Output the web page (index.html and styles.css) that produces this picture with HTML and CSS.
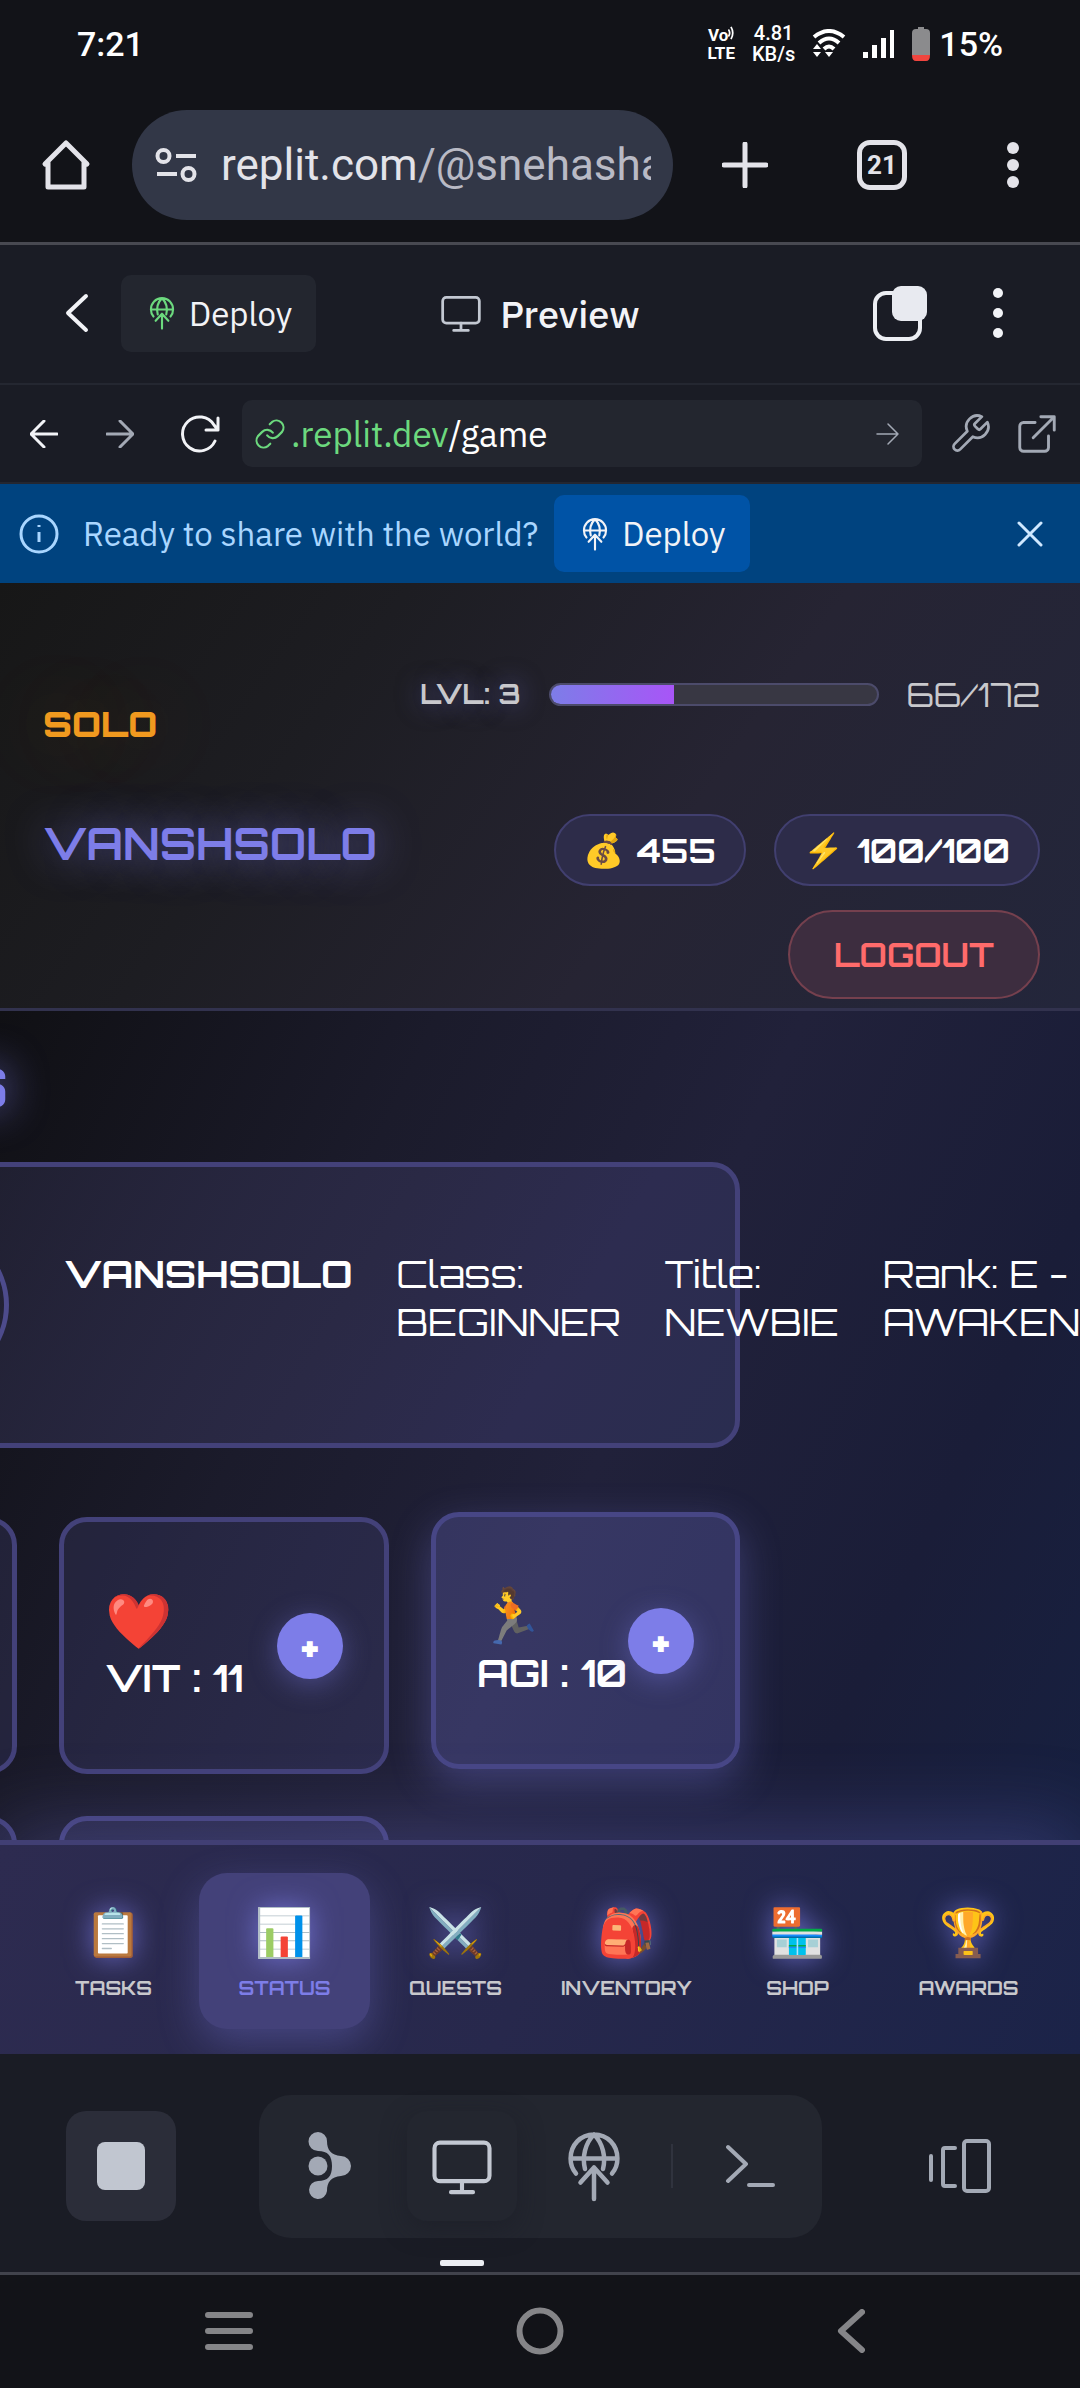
FILE: index.html
```html
<!DOCTYPE html>
<html lang="en">
<head>
<meta charset="utf-8">
<meta name="viewport" content="width=device-width, initial-scale=1">
<title>Solo – Status</title>
<link rel="stylesheet" href="styles.css">
</head>
<body>
<svg class="defs" aria-hidden="true">
  <symbol id="deploy" viewBox="0 0 24 24"><path d="M6 14.500A7.500 7.500 0 0 1 4.200 9.500C4.200 5 7.500 1.500 12 1.500s7.800 3.500 7.800 8a7.500 7.500 0 0 1-1.800 5M4.200 9.500h15.600M9 13C8 9 9 4.500 12 1.500c3 3 4 7.500 3 11.500M12 23V12.500M7.500 17.500 12 12.500l4.500 5"/></symbol>
  <symbol id="monitor" viewBox="0 0 24 24"><rect x="2" y="3.500" width="20" height="14" rx="2"/><path d="M12 17.500V21.500M8 21.500h8"/></symbol>
</svg>

<header class="browser">
  <div class="status">
    <span class="clock">7:21</span>
    <div class="indicators">
      <span class="volte"><b>Vo<svg viewBox="0 0 6 16" width="6" height="14"><path d="M0 4q3 4 0 8M3 1q4 7 0 14"/></svg></b><b>LTE</b></span>
      <span class="speed"><b>4.81</b><b>KB/s</b></span>
      <svg viewBox="0 0 34 30" width="34" height="30"><path d="M2 8Q17-4 32 8M7 14Q17 5 27 14M12 20Q17 15 22 20" fill="none" stroke="#fff" stroke-width="4"/><path d="M13 23h8l-4 5zM1 20h8L5 15zM1 23h8l-4 5z" fill="#fff"/></svg>
      <svg viewBox="0 0 32 28" width="32" height="28"><path d="M0 22h5v6H0zM9 15h5v13H9zM18 8h5v20h-5zM27 0h4v28h-4z" fill="#fff"/></svg>
      <svg viewBox="0 0 18 34" width="18" height="34"><path d="M6 0h6v2h2q4 0 4 4v22H0V6q0-4 4-4h2z" fill="#8b8b8d"/><path d="M0 28h18q0 6-4 6H4q-4 0-4-6z" fill="#f0453f"/></svg>
      <span class="percent">15%</span>
    </div>
  </div>
  <div class="toolbar">
    <button class="ico" aria-label="Home"><svg viewBox="0 0 52 52" width="52" height="52"><path d="M5 25 26 4l21 21M8 22v26h36V22" fill="none" stroke="#e3e3e9" stroke-width="5" stroke-linejoin="round" stroke-linecap="round"/></svg></button>
    <div class="omnibox">
      <svg viewBox="0 0 42 36" width="42" height="36"><g fill="none" stroke="#e3e3e9" stroke-width="4"><circle cx="8.500" cy="9" r="6"/><path d="M21 9h20M2 27h20"/><circle cx="33.500" cy="27" r="6"/></g></svg>
      <a class="address" href="#">replit.com<span>/@snehasha</span></a>
    </div>
    <button class="ico" aria-label="New tab"><svg viewBox="0 0 46 46" width="46" height="46"><path d="M23 2v42M2 23h42" stroke="#e3e3e9" stroke-width="5" stroke-linecap="round"/></svg></button>
    <button class="tabs" aria-label="Tabs">21</button>
    <button class="ico" aria-label="Menu"><svg viewBox="0 0 12 46" width="12" height="46" fill="#e3e3e9"><circle cx="6" cy="6" r="6"/><circle cx="6" cy="23" r="6"/><circle cx="6" cy="40" r="6"/></svg></button>
  </div>
</header>

<section class="pane">
  <button class="ico back" aria-label="Back"><svg viewBox="0 0 24 40" width="24" height="40"><path d="M21 3 3 20l18 17" fill="none" stroke="#f2f3f7" stroke-width="4" stroke-linecap="round" stroke-linejoin="round"/></svg></button>
  <button class="deploy"><svg class="line green" width="34" height="34"><use href="#deploy"/></svg>Deploy</button>
  <h1 class="pane-title"><svg class="line" width="44" height="44"><use href="#monitor"/></svg>Preview</h1>
  <div class="pane-actions">
    <button class="ico" aria-label="Switch tab"><svg viewBox="0 0 54 56" width="54" height="56"><rect x="2" y="8" width="45" height="46" rx="11" fill="none" stroke="#eceef3" stroke-width="4"/><rect x="19" y="1" width="35" height="35" rx="9" fill="#e8eaf0"/></svg></button>
    <button class="ico" aria-label="More"><svg viewBox="0 0 10 50" width="10" height="50" fill="#f2f3f7"><circle cx="5" cy="5" r="5"/><circle cx="5" cy="25" r="5"/><circle cx="5" cy="45" r="5"/></svg></button>
  </div>
</section>

<section class="webbar">
  <button class="ico" aria-label="Go back"><svg class="line white bold" viewBox="0 0 28 28" width="28" height="28"><path d="M27 14H1M14 1 1 14l13 13"/></svg></button>
  <button class="ico forward" aria-label="Go forward"><svg class="line dim bold" viewBox="0 0 28 28" width="28" height="28"><path d="M1 14h26M14 1l13 13-13 13"/></svg></button>
  <button class="ico" aria-label="Reload"><svg class="line white bold" viewBox="0 0 42 38" width="42" height="38"><path d="M37 26A17 17 0 1 1 36 10l4 5M40 3v12H28"/></svg></button>
  <div class="url">
    <svg class="line green" viewBox="0 0 24 24" width="34" height="34"><path d="M10 13a5 5 0 0 0 7.500.5l3-3a5 5 0 0 0-7-7l-1.700 1.700M14 11a5 5 0 0 0-7.500-.5l-3 3a5 5 0 0 0 7 7l1.700-1.700"/></svg>
    <a href="#"><span>.replit.dev</span>/game</a>
    <svg class="line dim go" viewBox="0 0 24 24" width="24" height="24"><path d="M1 12h21M12 2l10 10-10 10"/></svg>
  </div>
  <button class="ico" aria-label="Developer tools"><svg class="line dim" viewBox="0 0 24 24" width="44" height="44"><path d="M14.700 6.300a1 1 0 0 0 0 1.400l1.600 1.600a1 1 0 0 0 1.400 0l3.770-3.770a6 6 0 0 1-7.940 7.940l-6.910 6.910a2.120 2.120 0 0 1-3-3l6.910-6.910a6 6 0 0 1 7.940-7.940z"/></svg></button>
  <button class="ico" aria-label="Open in new tab"><svg class="line dim" viewBox="0 0 24 24" width="46" height="46"><path d="M18 13v6a2 2 0 0 1-2 2H5a2 2 0 0 1-2-2V8a2 2 0 0 1 2-2h6M14 3h7v7M10 14 21 3"/></svg></button>
</section>

<aside class="banner">
  <svg viewBox="0 0 40 40" width="40" height="40"><circle cx="20" cy="20" r="18" fill="none" stroke="#a9d6ff" stroke-width="3"/><path d="M20 18v10M20 11v2" stroke="#a9d6ff" stroke-width="3"/></svg>
  <p>Ready to share with the world?</p>
  <button class="deploy blue"><svg class="line white" width="34" height="34"><use href="#deploy"/></svg>Deploy</button>
  <button class="ico close" aria-label="Dismiss"><svg viewBox="0 0 26 26" width="26" height="26"><path d="M2 2l22 22M24 2 2 24" stroke="#cfe8ff" stroke-width="3" stroke-linecap="round"/></svg></button>
</aside>

<section class="game">
  <header class="player">
    <div class="identity">
      <p class="rank">SOLO</p>
      <h2 class="name">VANSHSOLO</h2>
    </div>
    <div class="stats">
      <div class="level">
        <span class="lvl">LVL: 3</span>
        <div class="bar"><div class="fill" style="width:38%"></div></div>
        <span class="xp">66/172</span>
      </div>
      <div class="pills">
        <span class="pill"><span class="emoji">💰</span>455</span>
        <span class="pill"><span class="emoji">⚡</span>100/100</span>
      </div>
      <button class="logout">LOGOUT</button>
    </div>
  </header>

  <main class="board">
    <div class="sheet">
      <h2 class="heading">S</h2>
      <div class="card profile">
        <div class="avatar"></div>
        <div class="facts">
          <strong>VANSHSOLO</strong>
          <span>Class:<br>BEGINNER</span>
          <span>Title:<br>NEWBIE</span>
          <span>Rank: E -<br>AWAKENED</span>
        </div>
      </div>
      <div class="grid">
        <div class="card stat"></div>
        <div class="card stat"><div><span class="emoji">❤️</span><b>VIT : 11</b></div><button class="plus" aria-label="Raise vitality">+</button></div>
        <div class="card stat raised"><div><span class="emoji">🏃</span><b>AGI : 10</b></div><button class="plus" aria-label="Raise agility">+</button></div>
        <div class="card stat"></div>
        <div class="card stat"></div>
      </div>
    </div>
  </main>

  <nav class="menu">
    <a href="#"><span class="emoji">📋</span>TASKS</a>
    <a href="#" class="on"><span class="emoji">📊</span>STATUS</a>
    <a href="#"><span class="emoji">⚔️</span>QUESTS</a>
    <a href="#"><span class="emoji">🎒</span>INVENTORY</a>
    <a href="#"><span class="emoji">🏪</span>SHOP</a>
    <a href="#"><span class="emoji">🏆</span>AWARDS</a>
  </nav>
</section>

<footer class="dock">
  <button class="slot stop" aria-label="Stop"><span></span></button>
  <div class="group">
    <button class="slot" aria-label="Agent"><svg viewBox="0 0 44 68" width="44" height="68" fill="#a3a9b5"><path d="M10 0a9 9 0 0 1 9 9c0 9 4 14 14 15a10 10 0 0 1 0 20c-10 1-14 6-14 15a9 9 0 1 1-9-10c10 0 14-5 14-15S20 19 10 19A9 9 0 0 1 10 0z"/><circle cx="10" cy="34" r="9.500"/></svg></button>
    <button class="slot current" aria-label="Preview"><svg class="line" width="72" height="66"><use href="#monitor"/></svg></button>
    <button class="slot" aria-label="Deployments"><svg class="line dim" width="72" height="72"><use href="#deploy"/></svg></button>
    <i class="divider"></i>
    <button class="slot" aria-label="Shell"><svg viewBox="0 0 50 44" width="50" height="44"><path d="M3 3l18 17L3 37M24 41h24" fill="none" stroke="#a3a9b5" stroke-width="4" stroke-linecap="round" stroke-linejoin="round"/></svg></button>
  </div>
  <button class="slot" aria-label="Open panes"><svg viewBox="0 0 62 54" width="62" height="54"><path d="M2 17v24M26 9H16q-2 0-2 2v34q0 2 2 2h10" fill="none" stroke="#a3a9b5" stroke-width="4" stroke-linecap="round"/><rect x="35" y="2" width="25" height="50" rx="3" fill="none" stroke="#a3a9b5" stroke-width="4"/></svg></button>
</footer>

<nav class="system">
  <button class="ico" aria-label="Recents"><svg viewBox="0 0 48 38" width="48" height="38"><path d="M3 3h42M3 19h42M3 35h42" stroke="#858588" stroke-width="6" stroke-linecap="round"/></svg></button>
  <button class="ico" aria-label="Home screen"><svg viewBox="0 0 48 48" width="48" height="48"><circle cx="24" cy="24" r="20.500" fill="none" stroke="#858588" stroke-width="6"/></svg></button>
  <button class="ico" aria-label="Back"><svg viewBox="0 0 28 44" width="28" height="44"><path d="M25 3 4 22l21 19" fill="none" stroke="#858588" stroke-width="6" stroke-linecap="round" stroke-linejoin="round"/></svg></button>
</nav>
</body>
</html>
```
FILE: styles.css
```css
* { box-sizing: border-box; }
body { margin: 0; background: #121318; color: #fff; font-family: Roboto, "Noto Sans", sans-serif; overflow-x: hidden; }
p, h1, h2 { margin: 0; }
button { margin: 0; padding: 0; border: 0; background: none; color: inherit; font: inherit; }
a { color: inherit; text-decoration: none; }
svg { display: block; flex: none; }
.defs { position: absolute; width: 0; height: 0; }
.line { fill: none; stroke: #c3c8d2; stroke-width: 1.5; stroke-linecap: round; stroke-linejoin: round; }
.bold { stroke-width: 3; }
.green { stroke: #6cd97e; }
.white { stroke: #f2f3f7; }
.dim { stroke: #a3a9b5; }
.ico { display: grid; place-items: center; flex: none; }
.emoji { font-family: "Noto Color Emoji", sans-serif; font-weight: 400; }

/* phone status bar and browser toolbar */
.browser { border-bottom: 3px solid #484951; background: #121318; }
.status { display: flex; justify-content: space-between; align-items: center; height: 88px; padding: 0 77px; font-size: 34px; font-weight: 500; }
.indicators { display: flex; align-items: center; gap: 17px; }
.volte, .speed { display: grid; justify-items: center; font-size: 20px; line-height: 21px; }
.volte { font-size: 17px; line-height: 18px; }
.volte b { display: flex; }
.speed b { font-weight: 500; }
.volte svg { fill: none; stroke: #fff; stroke-width: 2; }
.percent { margin-left: -8px; }
.toolbar { display: flex; align-items: center; height: 154px; padding: 0 61px 0 40px; }
.omnibox { flex: 1; min-width: 0; display: flex; align-items: center; gap: 24px; height: 110px; margin: 0 49px 0 40px; padding: 0 22px 0 23px; border-radius: 55px; background: #323747; }
.address { flex: 1; overflow: hidden; white-space: nowrap; font-size: 44px; line-height: 60px; color: #e3e3e9; }
.address span { color: #b9bac5; }
.tabs { width: 50px; height: 50px; margin: 0 100px 0 89px; border: 5px solid #e3e3e9; border-radius: 13px; font-size: 26px; line-height: 40px; font-weight: 700; color: #e3e3e9; }

/* workspace pane header */
.pane, .webbar, .banner { font-family: "IBM Plex Sans", Roboto, "Noto Sans", sans-serif; }
.pane { display: grid; grid-template-columns: auto auto 1fr auto; align-items: center; height: 140px; padding: 0 77px 2px 65px; background: #1a1c25; border-bottom: 2px solid #242731; }
.back { margin-right: 32px; }
.deploy { display: flex; align-items: center; gap: 10px; height: 77px; padding: 0 24px; border-radius: 10px; background: #23262f; font-size: 33px; color: #f2f3f7; }
.pane-title { display: flex; align-items: center; gap: 17px; margin-left: 123px; font-size: 38px; font-weight: 500; color: #f2f3f7; }
.pane-actions { display: flex; align-items: center; gap: 66px; }

/* preview address bar */
.webbar { display: flex; align-items: center; height: 99px; padding: 0 20px 0 30px; background: #1a1c25; border-bottom: 2px solid #242731; gap: 22px; }
.forward { margin: 0 22px 0 26px; }
.url { flex: 1; display: flex; align-items: center; height: 67px; padding: 0 22px 0 11px; margin-right: 4px; border-radius: 10px; background: #23262f; font-size: 35px; gap: 4px; }
.url span { color: #6cd97e; }
.go { margin-left: auto; }

/* share banner */
.banner { display: flex; align-items: center; height: 99px; padding: 0 37px 0 19px; background: #00437f; color: #a9d6ff; font-size: 33px; }
.banner p { margin: 0 16px 0 24px; }
.blue { background: #0053a6; }
.close { margin-left: auto; }

/* game */
.game { font-family: Orbitron, "DejaVu Sans", sans-serif; background: #1a1928; }
.player { display: flex; justify-content: space-between; height: 428px; padding: 89px 40px 0 43px; border-bottom: 3px solid #32324e; background: linear-gradient(125deg, #171717 0, #1d1d22 30%, #262433 62%, #23263b 100%); }
.identity { padding-top: 32px; }
.rank { font-size: 35px; line-height: 40px; font-weight: 900; color: #f0991f; text-shadow: 0 0 80px #f39c1f55; }
.name { margin-top: 73px; font-size: 44px; line-height: 54px; font-weight: 700; color: #7d7de8; text-shadow: 0 0 40px #7d7de8aa; }
.stats { display: flex; flex-direction: column; align-items: flex-end; }
.level { display: flex; align-items: center; gap: 28px; height: 44px; color: #c8c8cc; }
.lvl { font-size: 27px; font-weight: 700; text-shadow: 0 0 24px #7d7de888; }
.bar { width: 330px; height: 23px; border: 2px solid #4c4b6b; border-radius: 12px; background: #383743; overflow: hidden; }
.fill { height: 100%; background: linear-gradient(90deg, #7d7de8, #a855f7); }
.xp { font-size: 33px; }
.pills { display: flex; gap: 28px; margin-top: 98px; }
.pill { display: flex; align-items: center; gap: 12px; height: 72px; padding: 0 28px; border: 2px solid #413f6f; border-radius: 36px; background: #2d2c49; font-size: 33px; font-weight: 700; }
.logout { margin-top: 24px; height: 89px; padding: 0 44px; border: 2px solid #75404e; border-radius: 45px; background: #3d2d3f; color: #ff6b6b; font-size: 33px; font-weight: 700; }

.board { height: 829px; overflow: hidden; background: linear-gradient(115deg, #101014 0, #1b1b2b 30%, #21213a 55%, #1a1d38 80%, #172040 100%); }
.sheet { margin: 0 340px 0 -283px; padding-top: 40px; }
.heading { width: 291px; text-align: right; font-size: 54px; line-height: 70px; color: #7d7de8; text-shadow: 0 0 40px #7d7de8; }
.card { border: 5px solid #434179; border-radius: 28px; background: #7d7de81f; }
.profile { display: flex; align-items: center; height: 286px; margin: 41px 0 69px; padding-left: 133px; background: linear-gradient(120deg, #21213080 0, #2a2945 60%, #2d2c50 80%, #2a2d50 100%); }
.avatar { flex: none; width: 154px; height: 154px; border: 5px solid #4d4b8c; border-radius: 50%; margin-right: 55px; }
.facts { display: flex; gap: 44px; padding-bottom: 14px; font-size: 38px; line-height: 48px; white-space: nowrap; }
.grid { display: grid; grid-template-columns: 300px 330px minmax(0, 1fr); grid-auto-rows: 257px; gap: 42px; }
.stat { display: flex; align-items: center; justify-content: space-between; padding: 0 41px; }
.stat .emoji { display: block; font-size: 54px; line-height: 64px; }
.stat b { display: block; font-size: 38px; line-height: 48px; white-space: nowrap; }
.stat div { min-width: 0; flex: 1; }
.raised { margin: -5px 0 5px; border-color: #474685; background: #7d7de83d; box-shadow: 0 14px 42px #7d7de855; }
.plus { flex: none; width: 66px; height: 66px; border-radius: 50%; background: #7d7de8; font-size: 38px; font-weight: 900; box-shadow: 0 6px 28px #7d7de866; }

.menu { position: relative; display: grid; grid-template-columns: repeat(6, 1fr); height: 214px; padding: 28px 26px 25px 28px; border-top: 5px solid #413f74; background: linear-gradient(115deg, #2d2b50 0, #27284c 50%, #1b2348 100%); box-shadow: 0 -14px 80px #7d7de844; font-size: 19px; font-weight: 700; color: #c8c8cc; }
.menu a { display: grid; align-content: center; justify-items: center; height: 156px; border-radius: 28px; line-height: 28px; }
.menu .emoji { font-size: 47px; line-height: 64px; margin-bottom: 9px; text-shadow: 0 0 28px #7d7de8bb; }
.menu .on { background: #434179; color: #7d7de8; box-shadow: 0 14px 42px #7d7de855; }

/* workspace dock */
.dock { position: relative; display: flex; justify-content: space-between; align-items: center; height: 221px; padding: 6px 65px 0 66px; background: #1a1c25; border-bottom: 3px solid #41434c; }
.slot { flex: none; display: grid; place-items: center; width: 110px; height: 110px; border-radius: 20px; }
.stop { background: #2b2d39; }
.stop span { width: 48px; height: 48px; border-radius: 8px; background: #c1c6d0; }
.group { display: flex; align-items: center; gap: 22px; height: 143px; padding: 0 17px 0 16px; border-radius: 32px; background: #23262f; }
.current { position: relative; box-shadow: 0 8px 24px #1a1c2588; }
.current::after { content: ""; position: absolute; left: 33px; top: 149px; width: 44px; height: 6px; border-radius: 2px; background: #eceef3; }
.divider { width: 2px; height: 44px; background: #30333e; }
.system { display: grid; grid-template-columns: repeat(3, 1fr); height: 113px; padding: 0 74px 2px 73px; background: #121318; }
```
